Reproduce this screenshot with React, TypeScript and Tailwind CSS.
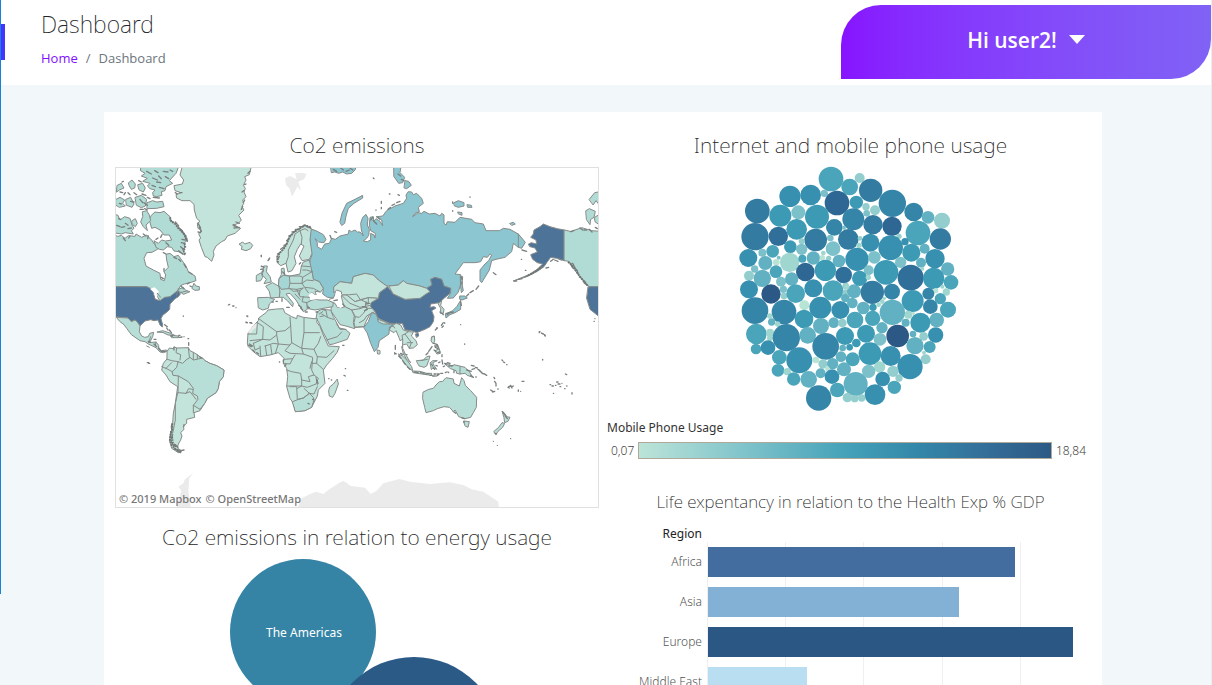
import React from "react";

const ICE = "#c3e4da";
const PALE = "#b8dfd7";
const MIST = "#b1dbd5";
const SKY = "#8cc6d0";
const NAVY = "#4e7399";

type Shape = [fill: string, d: string];

/* Each group has its own origin on the map canvas. */
const mapGroups: { x: number; y: number; shapes: Shape[]; borders: string; islands: string; rugged?: string }[] = [
  {
    x: 0,
    y: 0,
    shapes: [
      [ICE, "M218 15L210 45L221 60L217 72L192 77L195 92L213 98L198 104L200 114L216 122L240 122L252 133L253 150L260 175L270 184L262 190L264 205L274 211L266 222L272 234L267 240L274 262L285 290L292 292L305 304L312 285L310 274L318 258L335 245L345 240L352 228L375 220L392 205L378 202L368 196L385 190L394 180L386 166L402 150L396 140L401 130L398 120L408 110L402 96L406 85L400 76L408 60L404 50L418 44L425 15Z"],
      [MIST, "M10 225L24 229L34 226L45 235L55 227L75 229L78 222L95 232L110 225L125 240L134 254L150 262L142 268L126 277L110 278L102 295L108 318L130 330L150 340L152 358L163 362L167 345L162 335L175 322L170 300L168 283L180 280L192 290L205 286L215 300L228 318L235 335L255 348L258 362L240 368L223 372L213 376L205 388L220 382L228 392L240 395L220 403L208 394L180 412L150 422L130 392L110 380L10 380Z"],
      [MIST, "M125 165L135 156L150 158L162 154L180 170L182 182L195 190L206 205L220 216L232 240L222 250L225 262L218 268L225 285L205 275L192 273L185 262L172 260L160 270L148 268L138 262L132 242L145 250L155 240L166 243L185 240L178 225L162 225L150 210L135 202L125 205L118 180Z"],
      [MIST, "M95 15L208 15L198 40L178 62L188 70L168 80L165 92L154 95L156 106L140 110L130 108L128 98L135 90L120 86L112 78L120 70L98 64L112 55L94 48L105 40L92 32Z"],
      [MIST, "M112 128L128 122L140 126L158 124L162 140L140 145L112 146Z"],
      [MIST, "M10 162L24 166L30 180L44 170L60 175L66 195L72 205L64 212L70 222L46 218L34 222L10 218Z"],
      [MIST, "M98 155L110 152L118 165L122 182L108 195L112 212L100 200L92 186L98 170Z"],
      [MIST, "M76 112L94 106L110 118L106 138L94 143L80 136Z"],
      [MIST, "M48 118L62 112L72 132L66 142L50 136Z"],
      [MIST, "M18 118L30 112L44 120L38 130L46 138L28 142L18 136Z"],
      [MIST, "M56 68L66 60L76 72L74 84L64 88L58 78Z"],
      [MIST, "M84 74L98 70L106 84L100 96L88 90Z"],
      [MIST, "M22 76L34 70L42 84L28 90L20 96Z"],
      [MIST, "M66 182L76 176L82 190L76 200L68 194Z"],
      [MIST, "M246 384L252 370L258 378L268 380L268 390L256 391Z"],
      [ICE, "M388 252L398 246L404 252L420 247L428 256L422 266L408 272L394 268L396 260Z"],
      [NAVY, "M10 380L110 380L126 388L133 393L131 402L136 418L150 422L164 412L180 410L204 391L211 402L205 410L195 416L180 432L179 448L172 455L158 466L153 476L158 494L157 501L150 495L144 480L132 482L122 479L105 483L90 498L82 486L75 480L64 485L54 474L10 470Z"],
      ["#fff", "M120 386L134 382L148 396L140 400L142 414L136 414L133 400Z"],
      [PALE, "M20 472L54 474L64 485L75 480L82 486L90 498L88 515L95 528L104 532L115 530L119 520L131 517L128 530L122 542L116 548L138 546L146 556L146 568L154 572L170 570L172 574L160 578L150 576L138 563L115 552L105 545L90 542L64 524L50 505L42 494L30 485Z"],
      [PALE, "M142 516L158 512L182 520L194 526L174 525L160 518Z"],
      [PALE, "M184 526L205 528L206 533L186 533Z"],
    ],
    borders: "M212 398L232 392M142 400L152 412M122 530L116 548M138 546L136 556M205 386L200 405",
    islands:
      "M40 234l6 8M60 228l-4 6M100 222l8 6M115 228l-2 8M152 232l4 -8M180 180l8 6M196 186l10 12M205 202l12 10M214 214l14 14M224 228l8 16M216 238l10 2M214 248l10 2M212 260l8 8M206 272l12 10M168 248l8 8M138 238l6 -4M162 325v8M154 352l6 4M168 282l-8 -4M192 292l8 4M206 298l6 6M222 312l6 10M236 336l10 6M264 190l8 14M264 216l8 2M268 202l6 12M370 194l14 8M378 186l10 4M372 204l16 -2M396 96l6 -4M404 120l-4 8M398 140l-4 8M404 74l4 -2M210 98l6 0M196 98l6 4M414 40l6 -6M54 98l6 6M72 98l8 6M42 104l4 -6M36 66l4 -2M96 102l12 4M112 112l8 4M90 148l10 0M104 146l8 4M130 112l18 2M126 76l10 4M140 66l12 2M148 82l14 4M128 54l14 6M110 34l14 8M134 32l10 6M160 34l14 2M180 30l8 4M166 50l10 6M146 48l8 8M30 96l8 2M86 62l8 4M28 130l6 2M62 124l10 2M90 118l8 10M102 128l10 8M20 196l10 4M34 202l10 -2M46 190l8 6M54 206l10 -2M26 176l6 2M454 286v4M476 300l3 -6M454 320v0M355 435l4 -2M368 438l4 0M378 443v0M220 468v1M164 494l8 6M170 504l4 6M178 510l6 8M132 538l6 0M208 532l8 -1M222 530v0M413 468v2M408 488h4M420 488l6 2M240 378l4 2M232 372l6 -4M213 378l8 8",
    rugged: "M180 172L184 184L196 192L204 204L216 214L226 228L232 242M224 250L226 264L220 270L226 284",
  },
  {
    x: 390,
    y: 0,
    shapes: [
      [SKY, "M208 215L216 208L230 213L250 224L258 238L252 248L236 246L225 236L232 248L232 260L245 268L254 252L268 250L275 235L286 238L300 228L325 222L327 210L334 215L345 210L352 216L360 216L370 228L364 210L362 190L368 172L378 163L384 175L382 195L388 208L386 226L380 235L370 243L382 245L392 240L392 220L402 225L405 234L406 220L392 212L388 195L390 172L400 170L401 184L408 176L420 184L428 197L425 180L412 170L428 168L440 152L465 138L490 130L500 115L498 105L505 95L515 96L520 104L530 100L545 115L550 130L535 142L538 155L525 160L518 170L535 158L545 160L552 154L568 162L585 160L600 168L605 160L612 165L612 190L618 195L622 185L645 187L660 172L695 178L705 188L730 192L738 212L778 212L790 205L810 208L835 222L856 247L845 265L835 262L820 250L815 275L795 292L768 298L755 302L748 330L725 368L720 362L720 330L735 312L746 302L755 285L750 282L742 292L730 290L722 305L705 308L670 308L645 342L662 344L664 366L655 396L640 414L622 415L632 400L632 385L612 378L605 358L585 352L572 358L576 375L560 385L540 378L500 370L490 362L475 375L448 378L440 378L415 360L400 345L375 340L340 350L335 370L300 365L282 380L286 400L280 414L262 412L248 402L250 385L238 365L220 358L216 335L208 318L210 300L216 285L210 265L210 240Z"],
      [SKY, "M300 185L306 160L320 130L345 118L368 106L368 114L342 130L325 145L318 168L314 190L306 196Z"],
      [SKY, "M462 15L484 15L480 38L494 52L488 68L476 70L462 50Z"],
      [SKY, "M496 62L506 64L514 76L500 86L493 84Z"],
      [SKY, "M272 15L350 15L345 30L335 40L320 42L308 36L296 40L284 36L275 38Z"],
      [NAVY, "M393 428L415 415L418 398L443 380L460 402L495 418L540 415L558 402L570 395L560 385L576 375L572 358L585 352L605 358L612 378L632 385L630 400L612 415L598 428L586 430L572 432L570 442L582 440L588 444L575 452L582 470L580 485L570 500L555 508L530 518L515 512L495 510L487 490L470 492L450 490L430 482L415 475L405 455L392 440Z"],
      [NAVY, "M527 522L535 520L536 528L530 532Z"],
      [ICE, "M282 380L300 365L335 370L340 350L375 340L400 345L415 360L443 380L418 398L415 415L385 413L365 418L345 425L320 405L305 405L304 395L290 390L282 398Z"],
      [ICE, "M448 378L475 375L490 362L500 370L540 378L560 385L570 395L558 402L540 415L495 418L460 402Z"],
      [ICE, "M304 405L320 405L345 425L385 413L415 415L393 428L392 440L405 455L390 462L378 485L372 500L345 502L342 488L346 470L335 450L312 440L308 425Z"],
      [PALE, "M275 426L285 430L292 442L305 443L315 440L335 450L343 468L340 488L344 506L318 498L300 494L288 475L274 455Z"],
      [PALE, "M235 485L228 475L232 455L245 448L272 450L280 470L292 492L298 504L316 508L330 520L322 538L280 552L268 554L262 540L250 518Z"],
      [PALE, "M200 425L225 418L240 420L262 420L280 428L278 440L245 446L225 450L205 446Z"],
      [SKY, "M372 502L385 485L395 458L408 462L415 480L450 492L480 490L472 512L462 502L448 505L447 522L418 542L414 562L403 575L392 550L382 520Z"],
      [ICE, "M414 478L430 484L450 492L430 492L416 486Z"],
      [ICE, "M112 290L118 278L130 268L140 252L148 230L165 212L180 204L195 195L214 205L210 240L216 280L208 298L186 302L178 288L192 258L182 252L172 268L163 290L168 310L156 332L144 336L138 310L122 317L112 308Z"],
      [PALE, "M72 318L82 318L79 335L90 350L94 366L72 371L79 358L68 346Z"],
      [PALE, "M50 346L64 338L68 352L62 362L50 364Z"],
      [PALE, "M78 378L98 368L118 380L120 395L118 412L92 414L88 395Z"],
      [PALE, "M54 413L85 412L104 418L88 432L85 445L68 450L56 444Z"],
      [PALE, "M118 355L124 344L124 326L132 324L134 345L150 348L180 342L184 318L190 306L208 300L216 335L220 358L238 365L250 385L242 396L225 394L230 408L215 398L208 412L212 422L200 428L202 448L190 455L180 440L168 420L150 400L138 402L160 430L158 440L142 422L130 412L118 412L120 395L116 376Z"],
      ["#a5d5d4", "M118 355L130 346L148 348L150 370L146 386L124 388L116 376Z"],
      ["#ebebeb", "M135 55L150 48L170 58L165 40L185 38L200 42L192 58L175 65L184 92L172 80L156 110L148 85L138 75Z"],
      ["#fff", "M206 405L215 398L225 405L240 404L252 416L230 418L210 420Z"],
      ["#fff", "M286 400L298 395L306 404L298 412L304 425L310 438L302 444L292 440L290 420Z"],
    ],
    borders:
      "M138 310L145 290L145 270L160 240L165 222L180 212L186 232L184 252M180 212L195 206L204 212M150 348L180 348L188 352L216 335M184 318L210 320M188 330L200 330L216 335M188 352L186 370L150 370M186 370L200 360L220 362M186 370L194 382L220 385L240 396M146 386L170 388L190 384L180 392L160 394L150 386M170 388L180 410L208 412M180 392L178 405M195 384L205 398M190 410L186 425L200 428M165 402L180 418M304 405L330 430L360 442L392 436M320 405L350 402L360 418L385 430L385 413M335 450L360 446L376 440L378 425M345 470L358 472L370 460L380 445L395 445M358 488L372 480L380 468L390 462M245 448L258 452L262 472L280 478M250 468L240 470M248 455L238 462M262 472L245 462M290 492L300 508L318 508M260 540L292 530L305 516M835 222L835 262M280 414L268 418M345 502L372 500M456 492L458 508L448 508",
    islands:
      "M122 268l10 -8M112 282l8 -4M132 256l8 -4M140 242l6 -6M146 228l10 -4M156 216l12 -2M166 208l12 0M178 200l12 0M190 196l12 2M200 200l12 4M118 290l-4 6M64 318l8 4M62 328l8 -1M66 336l4 -4M84 302l3 -5M64 286v2M128 336l6 6M182 308l-4 4M96 426h4M108 424h4M126 416v8M140 442l8 0M176 436l8 6M182 444l6 6M204 440l4 4M196 456l6 0M228 456l6 0M284 215l6 2M270 226l4 10M400 54l2 2M448 102l2 0M474 104l4 2M424 124v6M424 142v4M444 148l8 -6M456 136l8 -4M470 128l10 -4M408 150v1M410 170l10 8M400 182l10 10M398 172l-6 8M280 28l10 6M300 22l10 8M318 34l10 -4M330 24l8 6M474 42l8 6M484 58l8 4M282 422l10 -2M308 432l6 6M368 440l12 2M378 432l10 -2M374 452l8 -4M20 468v0M18 486l4 2M30 488h4",
    rugged: "M114 308L112 290L120 278L130 268L140 252L148 232L164 214L180 205L194 196L212 202",
  },
  {
    x: 870,
    y: 0,
    shapes: [
      [SKY, "M162 128L175 122L192 128L192 138L175 142L164 138Z"],
      [SKY, "M202 134L214 136L216 142L204 142Z"],
      [SKY, "M174 156L186 158L186 166L176 162Z"],
      [SKY, "M330 190L340 187L346 192L336 196Z"],
      [SKY, "M182 348L188 350L186 372L190 392L184 398L182 380Z"],
      [SKY, "M180 408L194 408L202 414L186 420L180 418Z"],
      [SKY, "M182 422L182 448L165 458L150 464L138 474L136 462L158 452L170 440Z"],
      [PALE, "M115 430L125 422L122 436L132 448L130 460L122 460L122 446Z"],
      [PALE, "M96 530L102 528L104 540L97 540Z"],
      [NAVY, "M386 252L394 248L410 252L408 240L392 232L400 222L402 210L420 200L430 192L450 200L472 206L493 210L493 302L470 295L452 292L440 308L432 320L415 332L380 350L340 363L385 345L410 330L428 312L412 308L398 298L392 284L412 276L405 264L390 260Z"],
      [MIST, "M493 210L515 215L525 210L545 203L575 212L600 214L600 380L568 380L548 360L520 325L506 304L493 302Z"],
      [NAVY, "M565 380L600 380L600 472L585 460L570 448L560 415Z"],
      [MIST, "M558 152L568 146L586 154L582 172L572 178L570 194L560 180Z"],
      [MIST, "M568 118L584 98L600 95L600 138L588 122L580 134Z"],
      [MIST, "M584 172L600 162L600 196L586 186Z"],
    ],
    borders: "",
    islands:
      "M210 111v1M158 126v4M158 152v2M366 270l14 4M364 298h1M280 338l8 6M236 378l-8 10M220 392l-10 6M206 402l-6 6M186 366v6M184 352l2 6M342 363l8 0M356 358l10 -2M376 350l10 -4M392 344l8 -5M376 331h2M404 334l14 -8M420 326l8 -6M438 324l8 -2M452 304l8 -6M464 300l10 4M476 296l8 4M506 306l8 6M512 312l6 12M518 310l8 16M522 322l10 10M530 330l6 14M538 350l8 6M546 358l10 8M552 368l10 8M512 215l10 -4M540 204l8 6M552 210l8 0M568 208l8 8M586 202l6 4M142 464l6 -6M138 460l8 0M150 458l10 -2M182 426l2 10M134 488v2M130 498l-4 4M110 504h1M182 494v0M418 515h2M424 519l6 3M434 524l2 4M585 476v0M120 456l4 4M130 464l-4 -4",
    rugged: "M504 306L514 314L524 326L534 342L548 360L562 376M384 346L408 334L426 318",
  },
  {
    x: 0,
    y: 480,
    shapes: [
      [ICE, "M172 93L178 84L190 86L192 80L200 84L235 83L240 92L250 97L262 104L272 112L285 122L300 130L320 137L342 150L340 170L328 185L325 205L318 218L292 235L284 250L270 272L252 278L254 292L230 298L230 310L220 318L222 328L212 338L216 348L212 360L205 372L202 384L216 393L205 398L185 385L178 360L184 340L188 310L190 280L196 250L203 200L180 185L168 165L155 150L160 130L170 118Z"],
      [PALE, "M187 155L200 142L204 125L218 130L228 120L240 112L250 120L278 114L285 122L300 130L320 137L342 150L340 170L328 185L325 205L318 218L292 235L284 250L270 268L250 256L264 238L262 228L248 220L250 205L235 185L205 168L190 166Z"],
      [ICE, "M412 68L414 40L430 18L445 2L446 -6L468 -22L474 -30L500 -33L520 -34L524 -22L545 -10L560 -4L562 -14L580 -8L612 -4L622 -4L620 6L630 20L640 45L655 78L688 80L682 96L668 115L650 135L640 150L645 190L625 210L622 228L605 262L585 272L557 275L550 250L540 235L530 200L533 170L530 145L520 130L522 115L505 98L480 105L450 110L430 95L415 80Z"],
      [PALE, "M548 245L565 238L580 234L598 220L610 232L612 240L605 262L585 272L557 275Z"],
      [ICE, "M660 200L670 192L682 177L685 192L675 220L668 232L658 228L656 214Z"],
      ["#ebebeb", "M413 38L432 14L442 8L440 22L428 30L424 38Z"],
      ["#ebebeb", "M214 512L205 500L220 490L225 478L250 458L238 475L235 510L242 562L200 562Z"],
      ["#ebebeb", "M560 570L575 535L600 522L618 515L640 522L655 510L670 500L688 488L700 483L712 490L720 497L765 503L782 522L800 512L820 490L868 477L900 485L960 492L1020 487L1060 495L1085 508L1120 515L1165 545L1167 570Z"],
    ],
    borders:
      "M172 118L185 122L204 125M200 84L198 98L212 104L210 120M155 140L168 145L185 128M168 145L187 155M235 83L238 110M250 97L250 118M262 104L262 116M205 168L204 215L196 250L196 300L188 340M204 218L228 220L236 206L248 208M228 220L240 215L258 238M250 256L250 278M414 42L440 42L442 8M446 -4L500 35L525 32L542 18L540 -8M442 8L460 20L458 58L420 62M458 58L480 60L500 45L500 35M582 -6L582 38L628 38M582 38L575 85L545 68L542 18M500 45L505 72L540 75L545 68M465 78L490 70L505 72L496 100M450 78L452 108M466 78L470 105M482 76L486 104M430 70L435 90L448 84M430 70L458 58M540 75L525 92L540 100L580 102L575 85L612 88L625 70L632 50M612 88L622 110L650 112L672 92M522 118L548 116L555 105M580 102L608 112L605 150L612 165L595 170L600 185L575 180L572 160L545 155L530 150M622 110L620 130L640 148M605 125L600 145M530 198L575 198L575 180M575 198L592 202L618 192L625 175L612 165M540 200L560 200L562 238M562 205L575 198M565 238L580 234L598 220L582 205M598 220L612 222L622 200M618 172L622 195M606 130L620 130M520 130L540 132L548 116M110 78L118 82",
    islands:
      "M115 64l6 2M112 128h4M116 130h3M132 72l8 8M146 84l8 10M156 94l10 0M192 82v8M236 68v8M234 56h2M186 312l-2 8M184 322l2 10M182 334l0 12M180 348l6 8M182 358l4 12M186 368l4 8M190 376l8 4M192 384l10 6M188 344l-2 8M196 388l10 2M204 394l8 4M212 392l10 -2M196 374l8 8M222 314v4M418 72l10 6M416 76l8 4M428 90l6 6M440 98l6 4M508 126h1M520 120v6M524 138l4 -4M594 250l4 2M698 76l4 0M656 176h1M664 180h1M706 146h1M702 166l4 2M712 211h2M608 238l4 2M620 180l4 10M182 48h6M206 46h4M268 110l8 4",
    rugged: "M187 310L186 330L181 346L180 362L186 376L194 386L206 394L214 394M186 350L188 368L198 380",
  },
  {
    x: 720,
    y: 480,
    shapes: [
      [ICE, "M122 20L118 30L132 38L138 32L148 55L150 62L158 58L158 85L165 100L178 122L182 128L170 118L160 102L155 80L160 74L170 72L178 85L190 84L202 74L198 62L184 48L190 36L175 35L160 30L152 15L140 10Z"],
      [ICE, "M82 90L90 92L90 102L84 102Z"],
      [PALE, "M146 102L158 108L172 122L185 140L188 152L178 146L160 124Z"],
      [PALE, "M188 153L210 154L230 160L245 160L245 166L215 162L190 158Z"],
      [PALE, "M200 122L220 120L230 110L240 108L236 122L230 138L222 142L208 138Z"],
      [PALE, "M241 128L248 122L262 122L248 128L252 136L260 148L250 142L245 148Z"],
      [PALE, "M286 132L298 132L305 140L312 134L345 142L358 155L368 172L352 166L345 160L330 162L320 160L318 152L302 146Z"],
      [ICE, "M245 52L253 48L254 62L250 72L244 64Z"],
      [ICE, "M256 92L268 86L271 100L262 102Z"],
      [PALE, "M220 216L236 208L250 205L258 195L268 185L278 184L288 173L310 177L312 190L328 198L335 173L342 182L346 196L362 212L380 232L379 262L370 278L362 292L345 296L326 290L320 278L315 270L310 276L306 270L298 262L282 260L262 266L250 272L228 278L224 262L218 236Z"],
      [PALE, "M342 303L358 305L354 322L346 318Z"],
      [PALE, "M457 274L466 282L470 290L480 292L474 304L464 308L462 294Z"],
      [PALE, "M432 334L446 322L456 308L464 310L458 322L444 334L438 343Z"],
    ],
    borders: "M330 140L330 162M158 58L156 46L165 42L184 68L178 85M165 42L175 35M172 68L188 68M212 122L232 118M162 102L172 104M118 22L130 18L134 24",
    islands:
      "M136 76v12M134 98v4M138 100v2M152 100l6 4M146 108l6 6M162 128l4 6M158 122l4 6M172 140l8 8M194 156l10 2M212 158l10 2M228 162l8 -1M240 166l6 0M252 162l6 0M262 162h6M272 160h6M248 168l8 0M260 168l6 -4M228 104l6 -6M236 94l6 -8M242 86l4 -6M252 70l10 4M254 78l10 0M256 82l8 4M262 74l4 10M252 90l6 4M262 98l8 -2M276 104v6M244 132l4 6M250 144l4 4M258 136l4 2M266 128l4 -2M276 120l2 12M280 140l4 -2M284 130l6 2M292 128l8 2M296 138l12 -1M286 158l4 -2M294 156l2 2M312 152v6M364 136l8 2M376 142l6 2M350 150l14 4M366 148l8 -2M384 148l6 4M390 154l6 4M396 160l8 2M404 162l6 4M378 170v2M362 166l8 6M432 172l2 4M434 184l4 6M438 192v6M444 206v2M422 210l6 4M428 216l6 -2M476 200l6 -2M482 196l4 8M486 200l4 -2M474 202l4 2M505 210v4M516 184h6M568 36v2M576 40l4 2M584 46v1M344 72v1M578 118v2M646 162l4 2M600 194h2M606 198h4M616 196h2M620 186h4M624 192h6M636 190v0M630 200h2M644 206h1M650 198h1M610 220h1M666 218v4M512 214h0M458 276l8 10M466 288l6 8M430 364v0M442 376v0M482 356h0M312 276l6 4M336 294l8 2M342 304v4M436 340l4 2M456 120l2 2M460 126l4 2M470 134h1M732 4h1M274 16l6 -8M262 24l-6 6",
  },
];

const bubbleColors = ["#b7e4d4", "#9fd6cf", "#94cdcd", "#7cc0ca", "#61b1c2", "#4aa5bb", "#3d9ab5", "#3790b0", "#3585a8", "#347ba1", "#306f99", "#2e6794", "#2c5885"];

/* cx, cy, radius, color step */
const bubbles: [number, number, number, number][] = [
  [288, 57, 37, 5], [344, 81, 25, 5], [165, 109, 32, 7], [227, 105, 31, 7], [268, 100, 11, 3], [306, 129, 37, 11], [67, 153, 37, 9], [136, 167, 33, 6], [190, 157, 21, 3], [246, 170, 36, 6],
  [364, 127, 20, 6], [60, 230, 41, 9], [130, 229, 29, 10], [185, 208, 31, 6], [298, 202, 25, 8], [355, 178, 33, 8], [327, 203, 6, 3], [242, 240, 34, 9], [340, 238, 31, 9], [286, 234, 10, 3],
  [294, 266, 22, 3], [40, 294, 27, 7], [82, 278, 12, 3], [113, 274, 19, 5], [166, 260, 19, 6], [200, 244, 9, 2], [200, 268, 17, 3], [91, 309, 21, 4], [131, 293, 6, 3], [124, 307, 10, 0],
  [164, 307, 29, 1], [202, 296, 12, 5], [235, 294, 20, 4], [265, 279, 7, 1], [262, 293, 8, 0], [281, 295, 8, 2], [312, 303, 19, 4], [59, 327, 11, 3], [42, 347, 15, 2], [82, 355, 26, 4],
  [123, 335, 19, 5], [211, 336, 28, 11], [271, 331, 32, 6], [326, 345, 25, 10], [138, 365, 15, 3], [170, 357, 20, 4], [42, 388, 27, 7], [108, 402, 29, 12], [145, 388, 11, 3], [147, 408, 10, 2],
  [182, 401, 28, 5], [235, 385, 27, 7], [294, 392, 31, 5], [332, 378, 10, 2], [331, 396, 8, 2], [331, 414, 13, 4], [357, 394, 21, 4], [352, 429, 16, 4],
  [374, 54, 15, 2], [407, 91, 35, 9], [472, 130, 41, 8], [393, 140, 11, 2], [420, 151, 15, 2], [395, 160, 10, 3], [414, 194, 29, 9], [471, 199, 29, 11], [536, 156, 28, 8], [579, 172, 19, 4],
  [621, 182, 24, 2], [549, 219, 37, 5], [616, 237, 32, 9], [406, 248, 27, 7], [375, 235, 7, 2], [372, 256, 8, 1], [492, 229, 8, 2], [510, 245, 11, 7], [467, 263, 37, 7], [366, 298, 35, 7],
  [418, 292, 19, 3], [529, 278, 27, 6], [569, 266, 15, 4], [600, 296, 29, 7], [558, 308, 15, 4], [497, 307, 17, 3], [638, 327, 20, 4], [453, 337, 37, 6], [401, 331, 15, 3], [562, 326, 6, 1],
  [374, 355, 23, 6], [400, 352, 8, 1], [527, 353, 39, 10], [596, 355, 32, 6], [648, 367, 22, 5], [412, 397, 35, 9], [471, 395, 24, 8],
  [602, 392, 8, 0], [634, 396, 11, 1], [622, 380, 6, 1], [580, 401, 18, 8], [616, 416, 17, 5], [639, 449, 24, 5], [605, 480, 22, 4], [533, 423, 33, 6], [586, 440, 22, 8], [556, 488, 30, 6],
  [520, 464, 12, 1], [535, 460, 5, 0], [512, 488, 12, 4], [472, 457, 38, 4], [414, 442, 11, 6], [431, 434, 7, 1], [442, 425, 7, 1], [448, 415, 5, 1], [385, 444, 19, 4], [360, 480, 25, 5],
  [413, 475, 23, 5], [335, 380, 8, 1], [441, 503, 17, 4], [393, 521, 27, 6], [330, 528, 27, 6], [435, 538, 19, 3], [488, 528, 34, 12], [534, 522, 10, 4], [566, 529, 13, 2], [602, 525, 23, 7],
  [540, 557, 26, 4], [584, 561, 18, 5], [567, 578, 6, 1], [572, 598, 15, 2], [525, 620, 38, 7], [467, 588, 30, 7], [405, 581, 34, 6], [364, 549, 13, 6], [344, 562, 10, 6], [353, 598, 21, 5],
  [327, 628, 21, 4], [434, 621, 17, 1], [474, 634, 17, 2], [401, 634, 20, 3], [362, 672, 36, 4], [443, 657, 22, 7], [492, 654, 11, 2], [478, 682, 20, 5], [420, 704, 31, 7],
  [337, 713, 14, 2], [359, 716, 11, 2], [380, 714, 11, 2], [60, 452, 40, 8], [147, 456, 37, 8], [208, 436, 15, 0], [207, 477, 28, 6], [256, 443, 33, 7], [316, 450, 27, 7], [258, 498, 24, 4],
  [296, 488, 16, 4], [322, 489, 13, 2], [104, 468, 8, 1], [110, 486, 11, 4], [128, 492, 8, 1], [64, 522, 31, 5], [105, 518, 12, 1], [105, 534, 9, 1], [154, 533, 41, 8], [218, 526, 25, 4],
  [272, 559, 40, 8], [63, 567, 16, 5], [99, 563, 22, 7], [133, 592, 22, 5], [193, 601, 39, 7], [129, 631, 19, 5], [157, 635, 11, 1], [176, 657, 20, 5], [221, 658, 25, 4], [243, 600, 10, 0],
  [264, 612, 14, 2], [293, 611, 17, 4], [318, 590, 16, 4], [323, 564, 10, 4], [277, 626, 7, 0], [257, 640, 15, 4], [291, 650, 22, 7], [307, 690, 22, 5], [251, 714, 38, 8],
];

const regions = [
  { name: "Africa", value: 79.6, color: "bg-[#426d9e]" },
  { name: "Asia", value: 65.1, color: "bg-[#83b1d6]" },
  { name: "Europe", value: 94.6, color: "bg-[#2a5783]" },
  { name: "Middle East", value: 25.6, color: "bg-[#b9ddf1]" },
];

function ChartTitle({ children }: { children: React.ReactNode }) {
  return <h2 className="text-center text-[21px] leading-[30px] font-extralight text-[#222]">{children}</h2>;
}

function WorldMap() {
  return (
    <div className="relative mt-[7px] border border-[#e0e0e0]">
      <svg viewBox="18 24 1446 1017" className="block w-full" role="img" aria-label="World map of Co2 emissions">
        {mapGroups.map((group) => (
          <g key={`${group.x}-${group.y}`} transform={`translate(${group.x} ${group.y})`} strokeLinejoin="round" strokeLinecap="round">
            {group.shapes.map(([fill, d]) => (
              <path key={d} d={d} fill={fill} stroke={fill === "#ebebeb" || fill === "#fff" ? "none" : "#868b89"} strokeWidth="3" />
            ))}
            <path d={group.borders} fill="none" stroke="#868b89" strokeWidth="3" />
            <path d={group.islands} fill="none" stroke="#7a807f" strokeWidth="4" />
            <path d={group.rugged} fill="none" stroke="#6f7473" strokeWidth="6" strokeDasharray="5 3" strokeLinecap="butt" />
          </g>
        ))}
      </svg>
      <p className="absolute bottom-0 left-[3px] flex gap-1 text-[11px] leading-4 font-medium text-[#777]">
        <span>© 2019 Mapbox</span>
        <span>© OpenStreetMap</span>
      </p>
    </div>
  );
}

function UsageBubbles() {
  return (
    <svg viewBox="0 0 720 780" className="ml-32 block h-[260px] w-[240px]" role="img" aria-label="Internet and mobile phone usage by country">
      {bubbles.map(([cx, cy, r, step], i) => (
        <circle key={i} cx={cx} cy={cy} r={r} fill={bubbleColors[step]} />
      ))}
    </svg>
  );
}

export default function App() {
  return (
    <div className="relative h-screen overflow-hidden border-r border-[#e9eef1] bg-[#f2f7fa] font-['Noto_Sans','Open_Sans',sans-serif]">
      <div className="absolute top-0 left-0 h-[594px] w-px bg-[#1683d8]" />
      <div className="absolute top-6 left-px h-9 w-1 bg-[#4335ff]" />

      <header className="flex h-[85px] items-start justify-between bg-white pl-[41px] font-['Open_Sans','Noto_Sans',sans-serif]">
        <div className="pt-2">
          <h1 className="font-['Noto_Sans','Open_Sans',sans-serif] text-[23px] leading-8 font-extralight text-[#212529]">Dashboard</h1>
          <nav aria-label="Breadcrumb" className="mt-2">
            <ol className="flex gap-2 text-[13px] leading-5 text-[#6c757d]">
              <li><a href="#home" className="text-[#8010ff]">Home</a></li>
              <li aria-hidden="true">/</li>
              <li>Dashboard</li>
            </ol>
          </nav>
        </div>
        <button type="button" className="mt-[5px] flex h-[74px] w-[370px] items-center justify-center gap-3 rounded-tl-[40px] rounded-br-[40px] bg-linear-to-r from-[#8712ff] to-[#8062f5] pb-[5px] text-[21px] leading-8 font-semibold text-white">
          Hi user2!
          <svg viewBox="0 0 16 9" className="h-[9px] w-4" aria-hidden="true"><path d="M0 0H16L8 9Z" fill="currentColor" /></svg>
        </button>
      </header>

      <main className="mt-[27px] mr-[109px] ml-[104px] grid grid-cols-2 bg-white pt-[18px]">
        <div className="pr-1 pl-[11px]">
          <section>
            <ChartTitle>Co2 emissions</ChartTitle>
            <WorldMap />
          </section>
          <section className="mt-[14px]">
            <ChartTitle>Co2 emissions in relation to energy usage</ChartTitle>
            <svg viewBox="0 0 484 300" className="block w-full" role="img" aria-label="Co2 emissions and energy usage by region">
              <circle cx="188" cy="80" r="73" fill="#3584a5" />
              <circle cx="299" cy="192" r="87" fill="#2c5a87" />
              <text x="189" y="85" textAnchor="middle" fill="#fff" className="text-[12px]">The Americas</text>
            </svg>
          </section>
        </div>

        <div className="pr-2 pl-1">
          <section>
            <ChartTitle>Internet and mobile phone usage</ChartTitle>
            <UsageBubbles />
            <div className="pr-2 text-[12px] leading-4 text-[#333]">
              <p>Mobile Phone Usage</p>
              <div className="mt-[6px] flex items-center gap-1 pl-1 font-light text-[#444]">
                <span>0,07</span>
                <div className="h-[17px] flex-1 border border-[#b0a898] bg-[linear-gradient(to_right,#bce4d8_0%,#81c4cb_25%,#45a2b9_50%,#3488aa_67%,#34709a_83%,#2c5985_100%)]" />
                <span>18,84</span>
              </div>
            </div>
          </section>

          <section className="mt-[31px]">
            <h2 className="text-center text-[17px] leading-6 font-extralight text-[#222]">Life expentancy in relation to the Health Exp % GDP</h2>
            <p className="mt-3 w-[95px] text-right text-[12px] leading-4 text-[#222]">Region</p>
            <div className="relative">
              <div className="absolute inset-y-0 right-0 left-[100px] flex" aria-hidden="true">
                {[0, 1, 2, 3, 4].map((line) => (
                  <div key={line} className="w-[20.2%] shrink-0 border-l border-[#f0f0f0]" />
                ))}
              </div>
              <ul className="relative flex flex-col gap-[10px] pt-[5px]">
                {regions.map((region) => (
                  <li key={region.name} className="flex h-[30px] items-center">
                    <span className="w-[101px] shrink-0 pr-[6px] text-right text-[12px] leading-4 font-light text-[#555]">{region.name}</span>
                    <span className="h-full flex-1">
                      <span className={`block h-full ${region.color}`} style={{ width: `${region.value}%` }} />
                    </span>
                  </li>
                ))}
              </ul>
            </div>
          </section>
        </div>
      </main>
    </div>
  );
}
